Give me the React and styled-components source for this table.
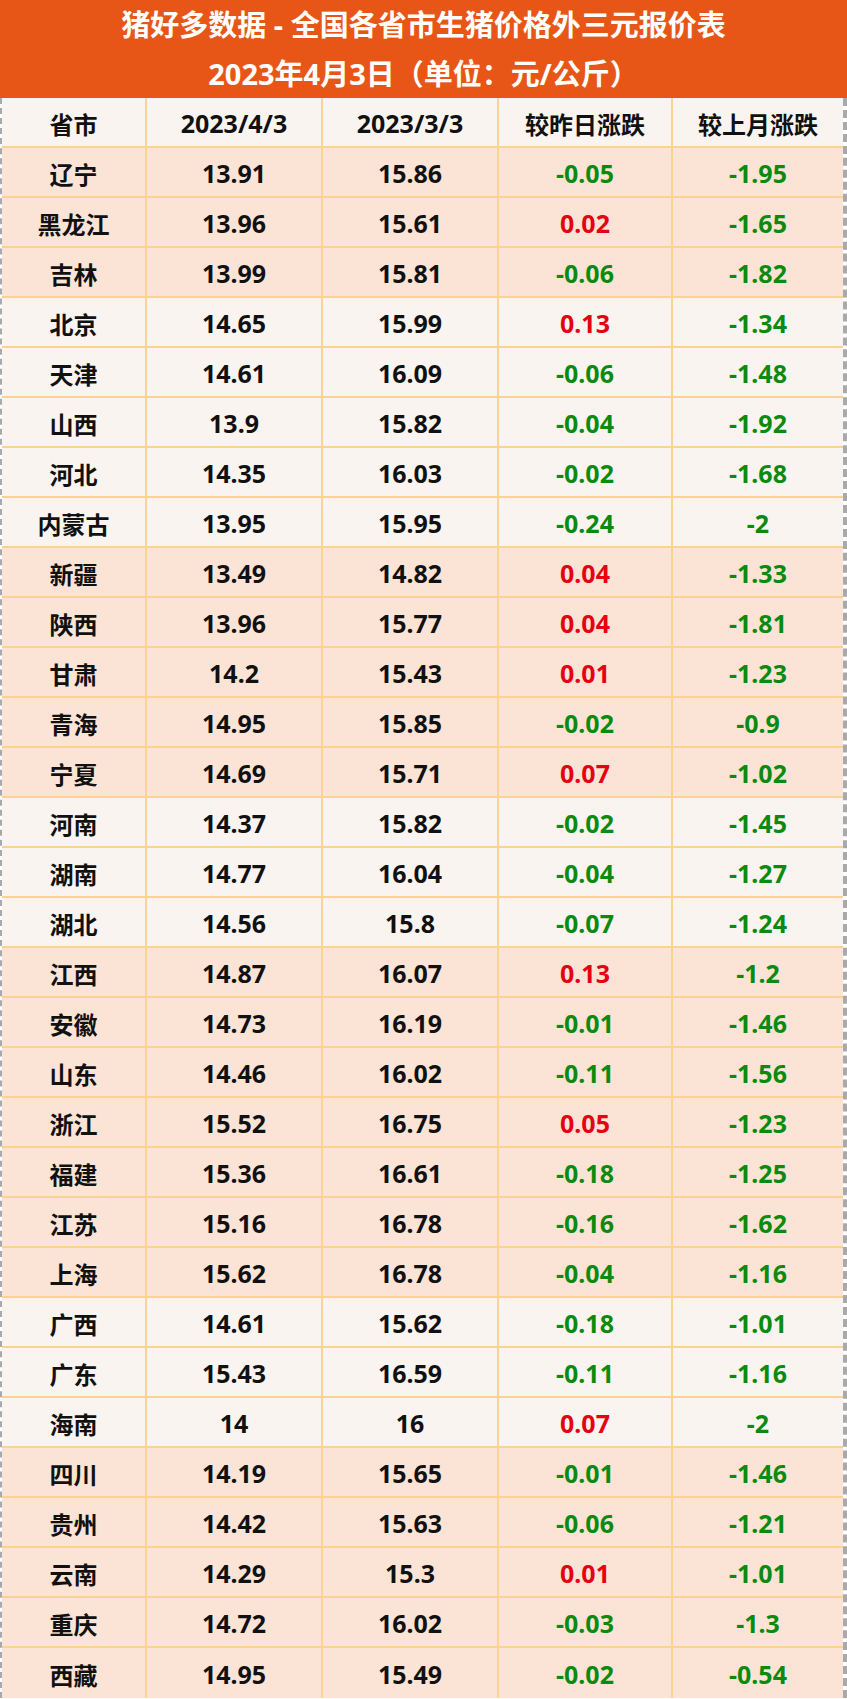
import React from 'react';
import styled, { createGlobalStyle } from 'styled-components';

const rows = [
	['辽宁', '13.91', '15.86', '-0.05', '-1.95', 'pink'],
	['黑龙江', '13.96', '15.61', '0.02', '-1.65', 'pink'],
	['吉林', '13.99', '15.81', '-0.06', '-1.82', 'pink'],
	['北京', '14.65', '15.99', '0.13', '-1.34', 'light'],
	['天津', '14.61', '16.09', '-0.06', '-1.48', 'light'],
	['山西', '13.9', '15.82', '-0.04', '-1.92', 'light'],
	['河北', '14.35', '16.03', '-0.02', '-1.68', 'light'],
	['内蒙古', '13.95', '15.95', '-0.24', '-2', 'light'],
	['新疆', '13.49', '14.82', '0.04', '-1.33', 'pink'],
	['陕西', '13.96', '15.77', '0.04', '-1.81', 'pink'],
	['甘肃', '14.2', '15.43', '0.01', '-1.23', 'pink'],
	['青海', '14.95', '15.85', '-0.02', '-0.9', 'pink'],
	['宁夏', '14.69', '15.71', '0.07', '-1.02', 'pink'],
	['河南', '14.37', '15.82', '-0.02', '-1.45', 'light'],
	['湖南', '14.77', '16.04', '-0.04', '-1.27', 'light'],
	['湖北', '14.56', '15.8', '-0.07', '-1.24', 'light'],
	['江西', '14.87', '16.07', '0.13', '-1.2', 'pink'],
	['安徽', '14.73', '16.19', '-0.01', '-1.46', 'pink'],
	['山东', '14.46', '16.02', '-0.11', '-1.56', 'pink'],
	['浙江', '15.52', '16.75', '0.05', '-1.23', 'pink'],
	['福建', '15.36', '16.61', '-0.18', '-1.25', 'pink'],
	['江苏', '15.16', '16.78', '-0.16', '-1.62', 'pink'],
	['上海', '15.62', '16.78', '-0.04', '-1.16', 'pink'],
	['广西', '14.61', '15.62', '-0.18', '-1.01', 'light'],
	['广东', '15.43', '16.59', '-0.11', '-1.16', 'light'],
	['海南', '14', '16', '0.07', '-2', 'light'],
	['四川', '14.19', '15.65', '-0.01', '-1.46', 'pink'],
	['贵州', '14.42', '15.63', '-0.06', '-1.21', 'pink'],
	['云南', '14.29', '15.3', '0.01', '-1.01', 'pink'],
	['重庆', '14.72', '16.02', '-0.03', '-1.3', 'pink'],
	['西藏', '14.95', '15.49', '-0.02', '-0.54', 'pink'],
];

const headers = ['省市', '2023/4/3', '2023/3/3', '较昨日涨跌', '较上月涨跌'];

const tone = (v) => (v.startsWith('-') ? 'down' : 'up');
const isNum = (v) => /^[-\d./]+$/.test(v);

const App = () => (
	<>
		<GlobalStyle />
		<Page>
			<Banner>
				<BannerLine>猪好多数据 - 全国各省市生猪价格外三元报价表</BannerLine>
				<BannerLine>2023年4月3日（单位：元/公斤）</BannerLine>
			</Banner>
			<Table>
				<Row $bg="light">
					{headers.map((h) => (
						<Cell key={h} $num={isNum(h)}>
							{h}
						</Cell>
					))}
				</Row>
				{rows.map(([name, today, month, day, mon, bg]) => (
					<Row key={name} $bg={bg}>
						<Cell>{name}</Cell>
						<Cell $num>{today}</Cell>
						<Cell $num>{month}</Cell>
						<Cell $num $tone={tone(day)}>
							{day}
						</Cell>
						<Cell $num $tone={tone(mon)}>
							{mon}
						</Cell>
					</Row>
				))}
			</Table>
		</Page>
	</>
);

const colors = {
	pink: '#fbe4d6',
	light: '#faf4f0',
	up: '#e60012',
	down: '#0a8a0f',
	line: '#fcd38e',
};

const Page = styled.div`
	width: 847px;
	font-family: 'Noto Sans', 'Noto Sans CJK SC', sans-serif;
	font-weight: 700;
`;

const Banner = styled.div`
	background: #e85617;
	height: 98px;
	display: flex;
	flex-direction: column;
	align-items: center;
	justify-content: center;
	color: #fff;
`;

const BannerLine = styled.div`
	font-size: 29px;
	line-height: 49px;
	white-space: nowrap;
`;

const Table = styled.div`
	border-left: 2px dashed #a9a9a9;
	border-right: 4px dashed #a9a9a9;
`;

const Row = styled.div`
	display: grid;
	grid-template-columns: 145px 176px 176px 174px 1fr;
	height: 50px;
	box-sizing: border-box;
	border-bottom: 2px solid ${colors.line};
	background: ${(p) => colors[p.$bg]};

	&:last-child {
		border-bottom: none;
	}
`;

const Cell = styled.div`
	display: flex;
	align-items: center;
	justify-content: center;
	padding-top: 2px;
	font-size: ${(p) => (p.$num ? '25px' : '24px')};
	color: ${(p) => (p.$tone ? colors[p.$tone] : '#111')};
	border-right: 2px solid ${colors.line};

	&:last-child {
		border-right: none;
	}
`;

const GlobalStyle = createGlobalStyle`
	body {
		margin: 0;
		background: #fff;
	}
`;

export default App;
